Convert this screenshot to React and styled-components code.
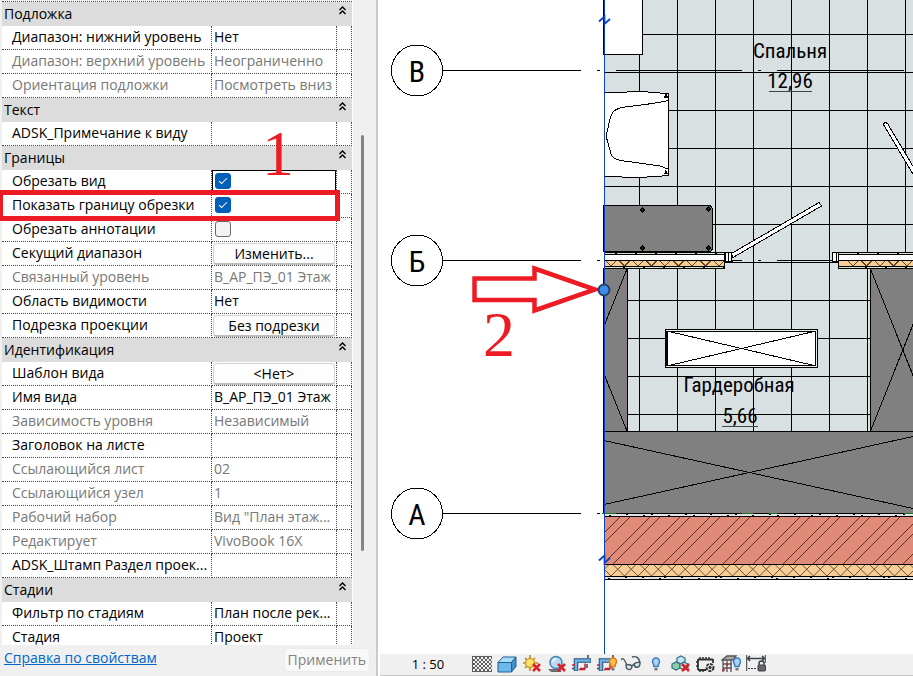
import React, { useState } from "react";
import styled, { createGlobalStyle, css } from "styled-components";

const GlobalStyle = createGlobalStyle`
  *, *::before, *::after { box-sizing: border-box; }
  body {
    margin: 0;
    background: #fff;
    color: #000;
    font-family: "Open Sans", "Noto Sans", sans-serif;
    font-size: 14px;
  }
  button, input { font: inherit; color: inherit; margin: 0; }
`;

const dots = "1px dotted #4a4a4a";

const Window = styled.div`
  display: flex;
  height: 100vh;
  overflow: hidden;
`;

/* ---------- properties palette ---------- */

const Palette = styled.aside`
  position: relative;
  flex: 0 0 378px;
  display: flex;
  flex-direction: column;
  overflow: hidden;
  background: #f0f0f0;
  border-right: 2px solid #cacaca;
`;

const Scroller = styled.div`
  flex: 1;
  min-height: 0;
  display: flex;
  gap: 8px;
  overflow: hidden;
  padding: 1px 12px 0 2px;
`;

const Sheet = styled.div`
  flex: 1;
  min-width: 0;
  padding-right: 1px;
  background: #fff;
`;

const Table = styled.table`
  width: 100%;
  table-layout: fixed;
  border-spacing: 0;
  border-top: ${dots};
`;

const NameCol = styled.col`
  width: 210px;
`;

const MarkCol = styled.col`
  width: 15px;
`;

const Heading = styled.th`
  height: 24px;
  padding: 0 6px 0 2px;
  background: #dcdcdc;
  font-weight: 400;
  text-align: left;
`;

const HeadingLine = styled.div`
  display: flex;
  justify-content: space-between;
  height: 24px;
  line-height: 24px;
`;

const Collapse = styled.button`
  display: flex;
  height: 16px;
  padding: 0;
  border: 0;
  background: none;
  align-items: center;
`;

const cell = css`
  height: 24px;
  padding: 0;
  line-height: 22px;
  vertical-align: top;
  border-right: ${dots};
  border-bottom: ${dots};
  color: ${(p) => (p.$muted ? "#787878" : "#000")};
  white-space: nowrap;
  overflow: hidden;
  font-weight: 400;
  text-align: left;
`;

const Name = styled.th`
  ${cell}
  padding-left: 10px;
`;

const Value = styled.td`
  ${cell}
  padding-left: ${(p) => (p.$button ? 1 : p.$check ? 3 : 2)}px;
  padding-right: ${(p) => (p.$button ? 1 : 0)}px;
  ${(p) => p.$focused && "box-shadow: inset 1px 1px #000, inset -1px 0 #000;"}
`;

const Mark = styled.td`
  ${cell}
`;

const Tick = styled.input`
  appearance: none;
  display: block;
  width: 16px;
  height: 16px;
  margin-top: 3px;
  border: 1px solid #6a6a6a;
  border-radius: 3px;
  background: #f3f3f3;

  &:checked {
    border-color: #005fb8;
    background: #005fb8;
  }

  &:checked::after {
    content: "";
    display: block;
    width: 8px;
    height: 4px;
    margin: 4px 3px;
    border-left: 1px solid #fff;
    border-bottom: 1px solid #fff;
    transform: rotate(-45deg);
  }
`;

const CellButton = styled.button`
  display: block;
  width: 100%;
  height: 22px;
  margin-top: 1px;
  padding: 0;
  border: 1px solid #d2d2d2;
  border-bottom: 2px solid #bdbdbd;
  border-radius: 4px;
  background: #fdfdfd;
  line-height: 18px;
`;

const Track = styled.div`
  width: 3px;
  padding: 134px 0 94px;
  display: flex;
`;

const Thumb = styled.div`
  flex: 1;
  border-radius: 2px;
  background: #858585;
`;

const Footer = styled.footer`
  display: flex;
  justify-content: space-between;
  align-items: flex-start;
  height: 31px;
  padding: 3px 6px 0 4px;
`;

const HelpLink = styled.a`
  color: #0066cc;
  line-height: 20px;
`;

const Apply = styled.button`
  height: 24px;
  padding: 0 3px;
  border: 1px solid #ebebeb;
  border-radius: 4px;
  background: #f9f9f9;
  color: #838383;
  line-height: 22px;

  &:disabled { color: #838383; }
`;

const RedFrame = styled.div`
  position: absolute;
  left: -2px;
  top: 190px;
  width: 342px;
  height: 31px;
  border: 5px solid #ed1c24;
  pointer-events: none;
`;

const StepOne = styled.span`
  position: absolute;
  left: 262px;
  top: 117px;
  color: #ed1c24;
  font: 64px/74px "Liberation Serif", serif;
  pointer-events: none;
`;

/* ---------- drawing area ---------- */

const Workspace = styled.main`
  flex: 1;
  min-width: 0;
  display: flex;
  flex-direction: column;
`;

const Plan = styled.svg`
  flex: 1;
  min-height: 0;
  width: 100%;
  display: block;
`;

const Outline = styled.g`
  fill: none;
  stroke: #000;
  shape-rendering: crispEdges;
`;

const Fill = styled.g`
  shape-rendering: crispEdges;
`;

const RoomText = styled.text`
  font-family: "Roboto Condensed", "Liberation Sans Narrow", "Open Sans", sans-serif;
  font-size: ${(p) => p.$size}px;
  font-weight: 400;
  text-anchor: middle;
`;

const StepTwo = styled.text`
  font: 64px "Liberation Serif", serif;
  fill: #ed1c24;
`;

const ViewBar = styled.div`
  display: flex;
  align-items: center;
  height: 22px;
  margin-left: 2px;
  padding-bottom: 1px;
  background: #f0f0f0;
  border-bottom: 1px solid #c4c4c4;
`;

const Scale = styled.button`
  width: 92px;
  padding: 0 0 0 4px;
  border: 0;
  background: none;
  font-size: 13px;
  line-height: 20px;
`;

const Tools = styled.div`
  flex: 0 0 294px;
  display: flex;
  justify-content: space-between;
`;

const Tool = styled.button`
  display: flex;
  width: 20px;
  height: 20px;
  padding: 0;
  border: 0;
  background: none;
`;

const sections = [
  {
    title: "Подложка",
    rows: [
      { name: "Диапазон: нижний уровень", value: "Нет" },
      { name: "Диапазон: верхний уровень", value: "Неограниченно", muted: true },
      { name: "Ориентация подложки", value: "Посмотреть вниз", muted: true },
    ],
  },
  { title: "Текст", rows: [{ name: "ADSK_Примечание к виду", value: "" }] },
  {
    title: "Границы",
    rows: [
      { name: "Обрезать вид", kind: "check", checked: true, focused: true, id: "crop-view" },
      { name: "Показать границу обрезки", kind: "check", checked: true, id: "crop-border" },
      { name: "Обрезать аннотации", kind: "check", checked: false, id: "crop-notes" },
      { name: "Секущий диапазон", kind: "button", value: "Изменить..." },
      { name: "Связанный уровень", value: "В_АР_ПЭ_01 Этаж", muted: true },
      { name: "Область видимости", value: "Нет" },
      { name: "Подрезка проекции", kind: "button", value: "Без подрезки" },
    ],
  },
  {
    title: "Идентификация",
    rows: [
      { name: "Шаблон вида", kind: "button", value: "<Нет>" },
      { name: "Имя вида", value: "В_АР_ПЭ_01 Этаж" },
      { name: "Зависимость уровня", value: "Независимый", muted: true },
      { name: "Заголовок на листе", value: "" },
      { name: "Ссылающийся лист", value: "02", muted: true },
      { name: "Ссылающийся узел", value: "1", muted: true },
      { name: "Рабочий набор", value: 'Вид "План этаж...', muted: true },
      { name: "Редактирует", value: "VivoBook 16X", muted: true },
      { name: "ADSK_Штамп Раздел проек...", value: "" },
    ],
  },
  {
    title: "Стадии",
    rows: [
      { name: "Фильтр по стадиям", value: "План после рек..." },
      { name: "Стадия", value: "Проект" },
    ],
  },
];

function CheckValue({ id, initial }) {
  const [on, setOn] = useState(initial);
  return <Tick id={id} type="checkbox" checked={on} onChange={() => setOn(!on)} />;
}

function PropertyRow({ row }) {
  return (
    <tr>
      <Name scope="row" $muted={row.muted}>
        {row.kind === "check" ? <label htmlFor={row.id}>{row.name}</label> : row.name}
      </Name>
      <Value
        $muted={row.muted}
        $button={row.kind === "button"}
        $check={row.kind === "check"}
        $focused={row.focused}
      >
        {row.kind === "check" && <CheckValue id={row.id} initial={row.checked} />}
        {row.kind === "button" && <CellButton type="button">{row.value}</CellButton>}
        {!row.kind && row.value}
      </Value>
      <Mark />
    </tr>
  );
}

function Section({ title, rows }) {
  return (
    <tbody>
      <tr>
        <Heading colSpan={3} scope="rowgroup">
          <HeadingLine>
            {title}
            <Collapse type="button" aria-label={title}>
              <svg width="7" height="9" viewBox="0 0 7 9" fill="none" stroke="#000" strokeWidth="1.4">
                <path d="M.5 4 3.5 1l3 3M.5 8l3-3 3 3" />
              </svg>
            </Collapse>
          </HeadingLine>
        </Heading>
      </tr>
      {rows.map((row) => (
        <PropertyRow key={row.name} row={row} />
      ))}
    </tbody>
  );
}

function Properties() {
  return (
    <Palette>
      <Scroller>
        <Sheet>
          <Table>
            <colgroup>
              <NameCol />
              <col />
              <MarkCol />
            </colgroup>
            {sections.map((s) => (
              <Section key={s.title} {...s} />
            ))}
          </Table>
        </Sheet>
        <Track>
          <Thumb />
        </Track>
      </Scroller>
      <Footer>
        <HelpLink href="#help">Справка по свойствам</HelpLink>
        <Apply type="button" disabled>Применить</Apply>
      </Footer>
      <RedFrame />
      <StepOne>1</StepOne>
    </Palette>
  );
}

const range = (n) => Array.from({ length: n }, (_, i) => i);

const gridPath =
  range(8).map((i) => `M${639.5 + 38 * i} 0V431`).join("") +
  range(11).map((i) => `M604 ${34.5 + 38 * i}H913`).join("");

const brickPath = range(14)
  .map((i) => {
    const x = 590 + 30 * i;
    return `M${x} 517l-48 48M${x + 10} 517l-48 48`;
  })
  .join("");

const insulationPath = range(26)
  .map((i) => {
    const x = 597.5 + 13.5 * i;
    return `M${x} 576l11-11M${x} 576l-11-11`;
  })
  .join("");

const specksPath = range(22)
  .map((i) => `M${609 + i * 14 + (i % 3) * 3} ${i % 2 ? 514.5 : 515.5}h2M${608 + i * 14 + (i % 4) * 3} ${i % 3 ? 577.5 : 578.5}h2`)
  .join("");

function PartitionWall({ from, to, start }) {
  const zig = range(9)
    .map((i) => start + 13.5 * i)
    .filter((x) => x - 5 > from - 3 && x + 5 < to + 3)
    .map((x) => `M${x - 5} 261l5 5l5-5`)
    .join("");
  const ticks = range(9)
    .map((i) => start + 4 + 20 * i)
    .filter((x) => x < to)
    .map((x) => `M${x} 253.5h2M${x + 8} 267.5h2`)
    .join("");
  return (
    <Fill>
      <rect x={from} y="252" width={to - from} height="17" fill="#d5e2cf" />
      <rect x={from} y="255" width={to - from} height="5" fill="#fff" />
      <rect x={from} y="261" width={to - from} height="5" fill="#f7cd95" />
      <path d={zig} fill="none" stroke="#54412a" />
      <path
        d={`M${from} 252.5H${to}M${from} 254.5H${to}M${from} 260.5H${to}M${from} 266.5H${to}M${from} 268.5H${to}${ticks}`}
        stroke="#000"
      />
    </Fill>
  );
}

function AxisBubble({ y, label }) {
  return (
    <g>
      <circle cx="417" cy={y} r="25.5" fill="#fff" stroke="#000" shapeRendering="crispEdges" />
      <RoomText x="417" y={y + 11} $size={30}>{label}</RoomText>
    </g>
  );
}

function FloorPlan() {
  return (
    <Plan viewBox="378 0 535 654" preserveAspectRatio="xMinYMin slice" role="img" aria-label="План этажа">
      <Fill>
        <rect x="604" y="0" width="309" height="431" fill="#d8e0e2" />
      </Fill>
      <Outline>
        <path d={gridPath} />
      </Outline>

      <Outline>
        <path d="M603 -1H642.5V54.5H603Z" fill="#fff" />
        <path d="M604 92.5H612L643 91.5L652 92.5L668.5 93.5V175.5L655 176.5L640 177.5L604 176.5Z" fill="#fff" />
        <path d="M668 100.5C655 104 638 105 622 107.500C611 110 611 114 607.500 130C605 139 608 141 611 154C613 160 620 160.500 628 161.500L660 166L668 169" />
        <path d="M663.500 97h4M664.500 95h2M665.500 93.500v4M663.500 173.500h4M664.500 172h2M665.500 170v4" strokeWidth="1.500" />
        <path d="M603 205.500H709Q712.500 206 712.500 210V247Q712.500 251.500 709 251.500H603Z" fill="#808080" />
        <path d="M642.500 208l2 2-2 2-2-2ZM708.500 207l2 2-2 2-2-2ZM642.500 246l2 2-2 2-2-2ZM708.500 246l2 2-2 2-2-2Z" fill="#333" />
      </Outline>

      <Outline>
        <path d="M616 70.500H742M758 70.500h3M777 70.500H904" />
        <path d="M725 260.500H742M758 260.500h3M777 260.500H838" />
      </Outline>

      <PartitionWall from={604} to={725} start={611} />
      <PartitionWall from={838} to={913} start={853} />
      <Outline>
        <path d="M724.500 252V269M838.500 252V269" />
        <path d="M725.500 252.500H731.500V261.500H725.500ZM728.500 252V261M832.500 252.500H838V261.500H832.500ZM836.500 252V261" fill="#fff" />
        <path d="M725 261.500H733M832 261.500H838" strokeWidth="2" />
        <path d="M731.500 253.500L819 202.500L821.500 206L733 257.500Z" fill="#fff" />
        <path d="M883.500 125.500V123.500L885.500 122.500L887.500 123.500L914 168V176L883.500 124.500" fill="#fff" />
      </Outline>

      <Outline>
        <path d="M603 268.500H627.500V431.500H603ZM870.500 268.500H914V431.500H870.500Z" fill="#808080" />
        <path d="M627 269L604 326M604 374L627 431M870.500 269L914 378M870.500 431L914 322" />
        <path d="M603 431.500H914V513.500H603Z" fill="#808080" />
        <path d="M604 440.500L913 508.500M604 504.500L913 436.500" />
        <path d="M665.500 329.500H817.500V367.500H665.500Z" fill="#e6f0e4" />
        <path d="M667.500 331.500H815.500V365.500H667.500Z" fill="#fff" />
        <path d="M666.500 331V366" />
        <path d="M669 331.500L814 365.500M669 365.500L814 331.500" />
      </Outline>

      <Fill>
        <rect x="604" y="513" width="309" height="67" fill="#e4e4e6" />
        <rect x="604" y="517" width="309" height="47" fill="#df8b77" />
        <rect x="604" y="565" width="309" height="11" fill="#f7cd95" />
      </Fill>
      <clipPath id="wall">
        <rect x="604" y="513" width="309" height="67" />
      </clipPath>
      <g clipPath="url(#wall)" fill="none">
        <clipPath id="brick">
          <rect x="604" y="517" width="309" height="47" />
        </clipPath>
        <path d={brickPath} clipPath="url(#brick)" stroke="#5a3129" shapeRendering="crispEdges" />
        <path d={insulationPath} stroke="#6b5438" />
        <path d={specksPath} stroke="#000" shapeRendering="crispEdges" />
      </g>
      <Outline>
        <path d="M604 513.500H913M604 516.500H913M604 564.500H913M604 576.500H913M604 579.500H913" />
        <path d="M602 513.500H616M742 513.500H753M769 513.500H777M904 513.500H913" stroke="#14781e" />
      </Outline>

      <RoomText x="790" y="58" $size={21}>Спальня</RoomText>
      <RoomText x="790" y="88" $size={21}>12,96</RoomText>
      <RoomText x="739" y="392" $size={21}>Гардеробная</RoomText>
      <RoomText x="740" y="423" $size={21}>5,66</RoomText>
      <Outline>
        <path d="M769 91.500H812M722 426.500H758" stroke="#444" />
      </Outline>

      <Outline>
        <path d="M442 70.500H581M597 70.500h3M442 260.500H581M597 260.500h3M442 513.500H581M597 513.500h3" />
      </Outline>
      <AxisBubble y={70.5} label="В" />
      <AxisBubble y={260.5} label="Б" />
      <AxisBubble y={513.5} label="А" />

      <g fill="none" stroke="#0a43c4">
        <path d="M604.500 0V654" shapeRendering="crispEdges" />
        <path d="M599 21.500L604.500 16.500V24L610 19M599 560.500L604.500 555.500V563L610 558" strokeWidth="1.800" />
      </g>
      <path
        d="M474.500 278.500H534.500V268.500L595 289.500L534.500 310.500V300H474.500Z"
        fill="none"
        stroke="#ed1c24"
        strokeWidth="4.500"
      />
      <circle cx="604" cy="290" r="5.500" fill="#3b8df0" stroke="#27415f" strokeWidth="2" />
      <StepTwo x="483" y="356">2</StepTwo>
    </Plan>
  );
}

const RedCross = () => <path d="m11 10 7 7m0-7-7 7" stroke="#d8232a" strokeWidth="2.600" fill="none" />;

const Bulb = ({ x, fill, stroke }) => (
  <g>
    <path d={`M${x} 4a3.500 3.500 0 0 1 3.500 3.500c0 2-1.500 2.500-1.500 5h-4c0-2.500-1.500-3-1.500-5A3.500 3.500 0 0 1 ${x} 4Z`} fill={fill} stroke={stroke} strokeWidth="1.500" />
    <path d={`M${x - 1.5} 14h3v2.500h-3z`} fill="#777" />
  </g>
);

const CropCorner = () => (
  <g fill="none">
    <path d="M4 17V6.500H19" stroke="#224f7c" strokeWidth="4.500" />
    <path d="M4 16.500V6.500H18.500" stroke="#6fb4e6" strokeWidth="2.500" />
    <path d="M0 11h3M7 15.500h6M13 9.500v5H8" stroke="#c62030" strokeWidth="1.500" />
    <path d="M0 14.500h2M16 1v3M15 10v4" stroke="#444" strokeWidth="1.500" />
  </g>
);

const tools = [
  {
    label: "Уровень детализации",
    art: (
      <g shapeRendering="crispEdges">
        <path d="M0 2h20v16H0z" fill="#5e5e5e" />
        {range(7).map((r) =>
          range(5).map((c) => (
            <rect key={`${r}-${c}`} x={1 + c * 4 + (r % 2) * 2} y={3 + r * 2} width="2" height="2" fill="#f3f3f3" />
          ))
        )}
      </g>
    ),
  },
  {
    label: "Визуальный стиль",
    art: (
      <g stroke="#245f91" strokeLinejoin="round">
        <path d="M1 8.500 6 3h13l-4.500 5.500Z" fill="#a9dbf7" />
        <path d="M1 8.500h13.500V18H1Z" fill="#6bb9ea" />
        <path d="M14.500 8.500 19 3v9.500L14.500 18Z" fill="#3f8fca" />
      </g>
    ),
  },
  {
    label: "Путь солнца",
    art: (
      <g>
        <path d="M8 1v3M8 14v3M1 9h2M3 4l2 2M13 4l-2 2M3 14l2-2M13 9h3" stroke="#b8862a" strokeWidth="1.600" />
        <circle cx="8" cy="9" r="4.500" fill="#ffe36d" stroke="#d99a22" strokeWidth="1.400" />
        <RedCross />
      </g>
    ),
  },
  {
    label: "Тени",
    art: (
      <g>
        <path d="M2 15.500h10l2 2H4Z" fill="#777" stroke="#666" />
        <circle cx="9" cy="8.500" r="6" fill="#b9dcf4" stroke="#4384b8" strokeWidth="1.500" />
        <path d="M6 8a3 3 0 0 1 3-3" stroke="#fff" strokeWidth="1.500" fill="none" />
        <RedCross />
      </g>
    ),
  },
  { label: "Обрезать вид", art: <CropCorner /> },
  {
    label: "Показать границу",
    art: (
      <g>
        <CropCorner />
        <Bulb x={16} fill="#ffc04a" stroke="#de7d1b" />
      </g>
    ),
  },
  {
    label: "Временное скрытие",
    art: (
      <g fill="#cfe8f5" stroke="#4a5560" strokeWidth="1.400" strokeLinejoin="round">
        <path d="M0 6c2-3 3-1 6 5M11 3c4-1 7 0 8 6" fill="none" />
        <path d="M5 11c2-1 5 0 6 1 0 5-6 5-6-1ZM13 10c2-2 6-2 6-1 0 5-5 6-6 1ZM11 12l2-2" />
      </g>
    ),
  },
  { label: "Скрытые элементы", art: <Bulb x={10} fill="#a9d4fa" stroke="#3b7bc0" /> },
  {
    label: "Временные свойства",
    art: (
      <g>
        <g stroke="#2f6d84" strokeWidth="1.200">
          <path d="m10 2 4 2v4l-4 2-4-2V4Z" fill="#c5e4f3" />
          <path d="m5 8 4 2v4l-4 2-4-2v-4Z" fill="#8fce9e" />
          <path d="m13 8 4 2v4l-4 2-4-2v-4Z" fill="#c5e4f3" />
        </g>
        <RedCross />
      </g>
    ),
  },
  {
    label: "Аналитическая модель",
    art: (
      <g fill="none" stroke="#333">
        <path d="M2 5.500h15M2 16h8M2 5v11M17 5v4" strokeWidth="1.800" />
        <path d="M4 3v2M7 3v2M10 3v2M13 3v2M4 16v2M7 16v2M0 8h2M0 12h2" strokeWidth="1.500" />
        <circle cx="14" cy="13.500" r="3.500" strokeWidth="2" strokeDasharray="3 1" fill="#f0f0f0" />
        <circle cx="14" cy="13.500" r="1.200" fill="#333" />
      </g>
    ),
  },
  {
    label: "Наборы смещений",
    art: (
      <g>
        <path d="M1 6 6 2h9l-3 4ZM2 6v12M6 6v12M10 6v12M2 10h9M2 14h9" fill="#aaa" stroke="#555" strokeWidth="1.300" />
        <path d="M1 16h3M6 9v3" stroke="#c62030" strokeWidth="1.500" />
        <Bulb x={16} fill="#a9d4fa" stroke="#3b7bc0" />
      </g>
    ),
  },
  {
    label: "Зависимости",
    art: (
      <g fill="none" stroke="#3c4048">
        <path d="M.7 1v16M19.300 1v8" />
        <path d="M1 4.500h18M4 2 1.500 4.500 4 7M16 2l2.500 2.500L16 7" strokeWidth="1.500" />
        <path d="M2 14.500h9" strokeDasharray="2 1" />
        <path d="M13 11v-1.500a2.500 2.500 0 0 1 5 0V11" strokeWidth="1.500" />
        <rect x="12" y="11" width="7.500" height="6" rx="1" fill="#666" />
      </g>
    ),
  },
];

function ViewControls() {
  return (
    <ViewBar role="toolbar">
      <Scale type="button">1 : 50</Scale>
      <Tools>
        {tools.map((t) => (
          <Tool key={t.label} type="button" aria-label={t.label}>
            <svg width="20" height="20" viewBox="0 0 20 20">{t.art}</svg>
          </Tool>
        ))}
      </Tools>
    </ViewBar>
  );
}

export default function App() {
  return (
    <Window>
      <GlobalStyle />
      <Properties />
      <Workspace>
        <FloorPlan />
        <ViewControls />
      </Workspace>
    </Window>
  );
}
